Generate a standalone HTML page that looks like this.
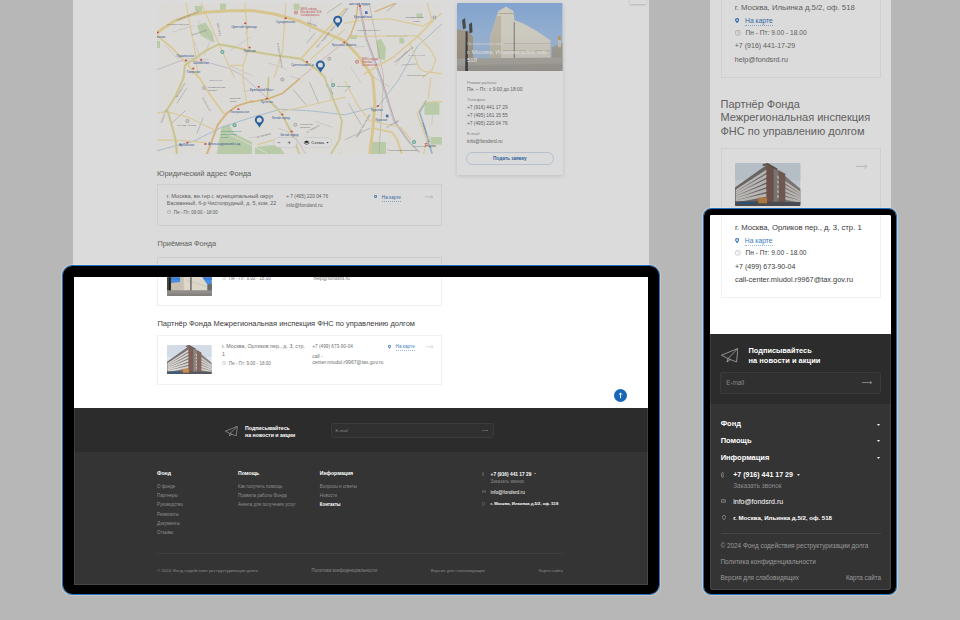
<!DOCTYPE html>
<html><head><meta charset="utf-8"><title>Contacts</title>
<style>
*{margin:0;padding:0;box-sizing:border-box}
html,body{width:960px;height:620px;overflow:hidden}
body{position:relative;background:#d6d6d6;font-family:"Liberation Sans",sans-serif}
.t{position:absolute;white-space:nowrap;line-height:1}
.r{position:absolute;display:block}
</style></head><body>
<div class="r" style="left:72.50px;top:0.00px;width:576.50px;height:588.00px;background:#fff"></div>
<div class="r" style="left:710.00px;top:0.00px;width:181.00px;height:588.00px;background:#fff"></div>
<div class="r" style="left:630.00px;top:-10.00px;width:16.00px;height:13.50px;background:#fff;box-shadow:0 1px 2px rgba(0,0,0,.18)"></div>
<svg class="r" style="left:157.00px;top:2.50px;" width="285.00" height="151.20" viewBox="0 0 285 151.2" preserveAspectRatio="none"><rect width="285" height="151.2" fill="#fffefa"/><path d="M40.0 22.5 L48.4 19.5 L54.5 28.5 L58.0 39.4 L53.2 38.2 L43.6 32.2Z" fill="#d8ecc4"/><path d="M174.6 76.3 L173.8 96.1" fill="none" stroke="#cfcfcb" stroke-width="0.45" stroke-linejoin="round" stroke-linecap="round"/><path d="M160.1 114.8 L145.1 119.0" fill="none" stroke="#ffffff" stroke-width="0.7" stroke-linejoin="round" stroke-linecap="round"/><path d="M70.8 41.8 L58.3 52.7" fill="none" stroke="#ffffff" stroke-width="0.7" stroke-linejoin="round" stroke-linecap="round"/><path d="M158.3 118.4 L174.9 124.2" fill="none" stroke="#cfcfcb" stroke-width="0.45" stroke-linejoin="round" stroke-linecap="round"/><path d="M206.7 84.0 L215.4 98.4" fill="none" stroke="#ffffff" stroke-width="0.7" stroke-linejoin="round" stroke-linecap="round"/><path d="M1.1 120.7 L14.9 128.9" fill="none" stroke="#ffffff" stroke-width="0.7" stroke-linejoin="round" stroke-linecap="round"/><path d="M149.2 2.8 L151.3 13.7" fill="none" stroke="#cfcfcb" stroke-width="0.45" stroke-linejoin="round" stroke-linecap="round"/><path d="M119.9 138.6 L119.8 155.6" fill="none" stroke="#ffffff" stroke-width="0.7" stroke-linejoin="round" stroke-linecap="round"/><path d="M100.8 69.2 L94.8 91.8" fill="none" stroke="#ffffff" stroke-width="0.7" stroke-linejoin="round" stroke-linecap="round"/><path d="M73.9 63.3 L95.4 72.7" fill="none" stroke="#cfcfcb" stroke-width="0.45" stroke-linejoin="round" stroke-linecap="round"/><path d="M71.8 44.2 L84.9 56.6" fill="none" stroke="#ffffff" stroke-width="0.7" stroke-linejoin="round" stroke-linecap="round"/><path d="M123.6 131.6 L113.7 137.7" fill="none" stroke="#ffffff" stroke-width="0.7" stroke-linejoin="round" stroke-linecap="round"/><path d="M276.7 98.1 L274.7 121.9" fill="none" stroke="#cfcfcb" stroke-width="0.45" stroke-linejoin="round" stroke-linecap="round"/><path d="M99.9 82.8 L107.4 86.1" fill="none" stroke="#ffffff" stroke-width="0.7" stroke-linejoin="round" stroke-linecap="round"/><path d="M41.7 124.8 L22.5 126.0" fill="none" stroke="#ffffff" stroke-width="0.7" stroke-linejoin="round" stroke-linecap="round"/><path d="M36.2 22.8 L15.5 29.2" fill="none" stroke="#cfcfcb" stroke-width="0.45" stroke-linejoin="round" stroke-linecap="round"/><path d="M114.4 143.0 L107.3 151.3" fill="none" stroke="#ffffff" stroke-width="0.7" stroke-linejoin="round" stroke-linecap="round"/><path d="M94.8 120.9 L80.1 122.2" fill="none" stroke="#ffffff" stroke-width="0.7" stroke-linejoin="round" stroke-linecap="round"/><path d="M213.8 72.2 L231.9 83.6" fill="none" stroke="#cfcfcb" stroke-width="0.45" stroke-linejoin="round" stroke-linecap="round"/><path d="M24.2 99.7 L3.7 105.7" fill="none" stroke="#ffffff" stroke-width="0.7" stroke-linejoin="round" stroke-linecap="round"/><path d="M239.5 72.4 L229.5 91.5" fill="none" stroke="#ffffff" stroke-width="0.7" stroke-linejoin="round" stroke-linecap="round"/><path d="M56.1 30.9 L47.2 52.4" fill="none" stroke="#cfcfcb" stroke-width="0.45" stroke-linejoin="round" stroke-linecap="round"/><path d="M272.2 55.1 L281.3 62.6" fill="none" stroke="#ffffff" stroke-width="0.7" stroke-linejoin="round" stroke-linecap="round"/><path d="M272.6 67.5 L248.3 72.4" fill="none" stroke="#ffffff" stroke-width="0.7" stroke-linejoin="round" stroke-linecap="round"/><path d="M8.0 42.2 L21.5 56.6" fill="none" stroke="#cfcfcb" stroke-width="0.45" stroke-linejoin="round" stroke-linecap="round"/><path d="M64.6 78.2 L68.3 85.8" fill="none" stroke="#ffffff" stroke-width="0.7" stroke-linejoin="round" stroke-linecap="round"/><path d="M243.0 121.7 L225.7 132.8" fill="none" stroke="#ffffff" stroke-width="0.7" stroke-linejoin="round" stroke-linecap="round"/><path d="M94.0 33.7 L73.4 47.5" fill="none" stroke="#cfcfcb" stroke-width="0.45" stroke-linejoin="round" stroke-linecap="round"/><path d="M47.6 116.6 L45.4 137.7" fill="none" stroke="#ffffff" stroke-width="0.7" stroke-linejoin="round" stroke-linecap="round"/><path d="M246.0 105.1 L255.8 115.5" fill="none" stroke="#ffffff" stroke-width="0.7" stroke-linejoin="round" stroke-linecap="round"/><path d="M154.8 4.1 L152.6 28.6" fill="none" stroke="#cfcfcb" stroke-width="0.45" stroke-linejoin="round" stroke-linecap="round"/><path d="M6.6 143.6 L5.7 154.0" fill="none" stroke="#ffffff" stroke-width="0.7" stroke-linejoin="round" stroke-linecap="round"/><path d="M97.7 40.0 L88.4 45.5" fill="none" stroke="#ffffff" stroke-width="0.7" stroke-linejoin="round" stroke-linecap="round"/><path d="M132.8 73.1 L142.2 75.7" fill="none" stroke="#cfcfcb" stroke-width="0.45" stroke-linejoin="round" stroke-linecap="round"/><path d="M103.8 18.5 L81.7 29.9" fill="none" stroke="#ffffff" stroke-width="0.7" stroke-linejoin="round" stroke-linecap="round"/><path d="M175.0 22.4 L184.8 32.3" fill="none" stroke="#ffffff" stroke-width="0.7" stroke-linejoin="round" stroke-linecap="round"/><path d="M28.9 54.9 L51.7 56.7" fill="none" stroke="#cfcfcb" stroke-width="0.45" stroke-linejoin="round" stroke-linecap="round"/><path d="M96.9 7.9 L107.5 7.9" fill="none" stroke="#ffffff" stroke-width="0.7" stroke-linejoin="round" stroke-linecap="round"/><path d="M17.7 10.2 L26.3 16.7" fill="none" stroke="#ffffff" stroke-width="0.7" stroke-linejoin="round" stroke-linecap="round"/><path d="M111.8 60.2 L129.6 66.2" fill="none" stroke="#cfcfcb" stroke-width="0.45" stroke-linejoin="round" stroke-linecap="round"/><path d="M256.4 117.8 L236.5 126.1" fill="none" stroke="#ffffff" stroke-width="0.7" stroke-linejoin="round" stroke-linecap="round"/><path d="M146.9 93.3 L142.2 100.8" fill="none" stroke="#ffffff" stroke-width="0.7" stroke-linejoin="round" stroke-linecap="round"/><path d="M105.2 85.5 L85.7 88.4" fill="none" stroke="#cfcfcb" stroke-width="0.45" stroke-linejoin="round" stroke-linecap="round"/><path d="M167.9 39.7 L183.0 39.9" fill="none" stroke="#ffffff" stroke-width="0.7" stroke-linejoin="round" stroke-linecap="round"/><path d="M50.2 35.0 L62.3 45.9" fill="none" stroke="#ffffff" stroke-width="0.7" stroke-linejoin="round" stroke-linecap="round"/><path d="M102.2 133.5 L91.8 134.9" fill="none" stroke="#cfcfcb" stroke-width="0.45" stroke-linejoin="round" stroke-linecap="round"/><path d="M233.5 130.5 L243.2 142.0" fill="none" stroke="#ffffff" stroke-width="0.7" stroke-linejoin="round" stroke-linecap="round"/><path d="M23.0 67.8 L19.4 90.6" fill="none" stroke="#ffffff" stroke-width="0.7" stroke-linejoin="round" stroke-linecap="round"/><path d="M36.9 37.4 L44.5 58.9" fill="none" stroke="#cfcfcb" stroke-width="0.45" stroke-linejoin="round" stroke-linecap="round"/><path d="M47.9 17.7 L68.6 21.6" fill="none" stroke="#ffffff" stroke-width="0.7" stroke-linejoin="round" stroke-linecap="round"/><path d="M110.0 101.0 L125.8 102.1" fill="none" stroke="#ffffff" stroke-width="0.7" stroke-linejoin="round" stroke-linecap="round"/><path d="M184.4 150.0 L173.6 156.8" fill="none" stroke="#cfcfcb" stroke-width="0.45" stroke-linejoin="round" stroke-linecap="round"/><path d="M135.1 100.3 L154.7 104.1" fill="none" stroke="#ffffff" stroke-width="0.7" stroke-linejoin="round" stroke-linecap="round"/><path d="M165.3 68.9 L144.2 80.5" fill="none" stroke="#ffffff" stroke-width="0.7" stroke-linejoin="round" stroke-linecap="round"/><path d="M249.5 47.4 L239.1 62.2" fill="none" stroke="#cfcfcb" stroke-width="0.45" stroke-linejoin="round" stroke-linecap="round"/><path d="M11.2 100.9 L-1.9 112.9" fill="none" stroke="#ffffff" stroke-width="0.7" stroke-linejoin="round" stroke-linecap="round"/><path d="M119.2 114.3 L133.7 121.8" fill="none" stroke="#ffffff" stroke-width="0.7" stroke-linejoin="round" stroke-linecap="round"/><path d="M207.9 43.5 L197.9 44.1" fill="none" stroke="#cfcfcb" stroke-width="0.45" stroke-linejoin="round" stroke-linecap="round"/><path d="M69.6 86.7 L67.8 109.5" fill="none" stroke="#ffffff" stroke-width="0.7" stroke-linejoin="round" stroke-linecap="round"/><path d="M129.2 45.3 L113.3 57.2" fill="none" stroke="#ffffff" stroke-width="0.7" stroke-linejoin="round" stroke-linecap="round"/><path d="M193.9 64.6 L203.8 79.5" fill="none" stroke="#cfcfcb" stroke-width="0.45" stroke-linejoin="round" stroke-linecap="round"/><path d="M156.1 9.5 L167.4 11.6" fill="none" stroke="#ffffff" stroke-width="0.7" stroke-linejoin="round" stroke-linecap="round"/><path d="M51.5 87.8 L45.4 100.8" fill="none" stroke="#ffffff" stroke-width="0.7" stroke-linejoin="round" stroke-linecap="round"/><path d="M41.1 17.8 L53.5 35.8" fill="none" stroke="#cfcfcb" stroke-width="0.45" stroke-linejoin="round" stroke-linecap="round"/><path d="M278.2 7.0 L266.6 12.6" fill="none" stroke="#ffffff" stroke-width="0.7" stroke-linejoin="round" stroke-linecap="round"/><path d="M178.8 143.1 L175.3 157.4" fill="none" stroke="#ffffff" stroke-width="0.7" stroke-linejoin="round" stroke-linecap="round"/><path d="M121.0 124.9 L131.9 129.3" fill="none" stroke="#cfcfcb" stroke-width="0.45" stroke-linejoin="round" stroke-linecap="round"/><path d="M10.7 65.5 L20.0 67.6" fill="none" stroke="#ffffff" stroke-width="0.7" stroke-linejoin="round" stroke-linecap="round"/><path d="M152.7 55.2 L169.1 58.2" fill="none" stroke="#ffffff" stroke-width="0.7" stroke-linejoin="round" stroke-linecap="round"/><path d="M92.3 22.8 L88.1 31.0" fill="none" stroke="#cfcfcb" stroke-width="0.45" stroke-linejoin="round" stroke-linecap="round"/><path d="M38.0 3.0 L45.0 3.0 L45.0 8.6 L38.0 8.6Z" fill="#d8ecc4"/><path d="M63.0 0.7 L69.0 0.7 L69.0 6.8 L63.0 6.8Z" fill="#d8ecc4"/><path d="M136.6 0.7 L142.6 0.7 L142.6 6.8 L136.6 6.8Z" fill="#d8ecc4"/><path d="M219.4 38.0 L224.0 35.8 L229.1 45.0 L228.0 57.6 L221.0 55.0Z" fill="#d8ecc4"/><path d="M242.4 34.6 L247.3 34.6 L247.3 40.6 L242.4 40.6Z" fill="#d8ecc4"/><path d="M259.4 10.4 L265.4 10.4 L265.4 15.2 L259.4 15.2Z" fill="#d8ecc4"/><path d="M192.8 32.0 L200.0 32.0 L200.0 36.0 L192.8 36.0Z" fill="#d8ecc4"/><path d="M59.6 151.5 L64.6 124.2 L72.0 121.7 L77.0 130.4 L95.0 139.1 L95.0 151.5Z" fill="#d8ecc4"/><path d="M98.0 144.0 L121.6 141.6 L127.8 151.5 L98.0 151.5Z" fill="#d8ecc4"/><path d="M267.5 99.3 L282.4 99.3 L282.4 111.8 L267.5 111.8Z" fill="#d8ecc4"/><path d="M273.7 134.0 L284.9 134.0 L284.9 141.6 L273.7 141.6Z" fill="#d8ecc4"/><path d="M212.8 139.0 L229.0 139.0 L229.0 151.5 L212.8 151.5Z" fill="#d8ecc4"/><path d="M0.0 38.0 L3.0 38.0 L3.0 45.0 L0.0 45.0Z" fill="#d8ecc4"/><path d="M0.0 15.0 L20.0 28.0 L40.0 45.0 L60.0 60.0" fill="none" stroke="#ffffff" stroke-width="0.9" stroke-linejoin="round" stroke-linecap="round"/><path d="M10.0 0.0 L18.0 12.0" fill="none" stroke="#ffffff" stroke-width="0.9" stroke-linejoin="round" stroke-linecap="round"/><path d="M55.0 5.0 L80.0 22.0 L90.0 35.0" fill="none" stroke="#ffffff" stroke-width="0.9" stroke-linejoin="round" stroke-linecap="round"/><path d="M100.0 10.0 L110.0 40.0 L105.0 70.0" fill="none" stroke="#ffffff" stroke-width="0.9" stroke-linejoin="round" stroke-linecap="round"/><path d="M60.0 15.0 L100.0 20.0 L140.0 25.0" fill="none" stroke="#ffffff" stroke-width="0.9" stroke-linejoin="round" stroke-linecap="round"/><path d="M0.0 55.0 L20.0 70.0 L30.0 90.0" fill="none" stroke="#ffffff" stroke-width="0.9" stroke-linejoin="round" stroke-linecap="round"/><path d="M140.0 30.0 L170.0 45.0 L200.0 50.0" fill="none" stroke="#ffffff" stroke-width="0.9" stroke-linejoin="round" stroke-linecap="round"/><path d="M150.0 80.0 L180.0 90.0 L210.0 85.0" fill="none" stroke="#ffffff" stroke-width="0.9" stroke-linejoin="round" stroke-linecap="round"/><path d="M230.0 80.0 L260.0 85.0 L285.0 80.0" fill="none" stroke="#ffffff" stroke-width="0.9" stroke-linejoin="round" stroke-linecap="round"/><path d="M0.0 90.0 L25.0 100.0 L50.0 105.0" fill="none" stroke="#ffffff" stroke-width="0.9" stroke-linejoin="round" stroke-linecap="round"/><path d="M70.0 130.0 L90.0 140.0 L110.0 150.0" fill="none" stroke="#ffffff" stroke-width="0.9" stroke-linejoin="round" stroke-linecap="round"/><path d="M170.0 110.0 L200.0 130.0 L210.0 150.0" fill="none" stroke="#ffffff" stroke-width="0.9" stroke-linejoin="round" stroke-linecap="round"/><path d="M235.0 20.0 L250.0 40.0 L255.0 60.0" fill="none" stroke="#ffffff" stroke-width="0.9" stroke-linejoin="round" stroke-linecap="round"/><path d="M120.0 20.0 L140.0 60.0 L160.0 70.0" fill="none" stroke="#ffffff" stroke-width="0.9" stroke-linejoin="round" stroke-linecap="round"/><path d="M30.0 80.0 L40.0 100.0 L45.0 130.0" fill="none" stroke="#ffffff" stroke-width="0.9" stroke-linejoin="round" stroke-linecap="round"/><path d="M250.0 90.0 L240.0 110.0 L250.0 130.0" fill="none" stroke="#ffffff" stroke-width="0.9" stroke-linejoin="round" stroke-linecap="round"/><path d="M136.5 86.9 L149.0 101.8" fill="none" stroke="#b8b8b5" stroke-width="0.6" stroke-linejoin="round" stroke-linecap="round"/><path d="M152.6 79.5 L161.3 99.3" fill="none" stroke="#b8b8b5" stroke-width="0.6" stroke-linejoin="round" stroke-linecap="round"/><path d="M188.0 88.2 L193.0 84.4" fill="none" stroke="#b8b8b5" stroke-width="0.6" stroke-linejoin="round" stroke-linecap="round"/><path d="M191.7 100.6 L204.1 121.7" fill="none" stroke="#b8b8b5" stroke-width="0.6" stroke-linejoin="round" stroke-linecap="round"/><path d="M188.0 136.6 L212.8 125.4" fill="none" stroke="#b8b8b5" stroke-width="0.6" stroke-linejoin="round" stroke-linecap="round"/><path d="M170.0 10.0 L185.0 0.0" fill="none" stroke="#b8b8b5" stroke-width="0.6" stroke-linejoin="round" stroke-linecap="round"/><path d="M230.0 8.0 L240.0 0.0" fill="none" stroke="#b8b8b5" stroke-width="0.6" stroke-linejoin="round" stroke-linecap="round"/><path d="M230.0 33.0 L250.0 33.0" fill="none" stroke="#b8b8b5" stroke-width="0.6" stroke-linejoin="round" stroke-linecap="round"/><path d="M245.0 62.0 L260.0 61.0" fill="none" stroke="#b8b8b5" stroke-width="0.6" stroke-linejoin="round" stroke-linecap="round"/><path d="M20.0 100.0 L30.0 85.0" fill="none" stroke="#b8b8b5" stroke-width="0.6" stroke-linejoin="round" stroke-linecap="round"/><path d="M15.0 120.0 L28.0 108.0" fill="none" stroke="#b8b8b5" stroke-width="0.6" stroke-linejoin="round" stroke-linecap="round"/><path d="M40.0 130.0 L46.0 115.0" fill="none" stroke="#b8b8b5" stroke-width="0.6" stroke-linejoin="round" stroke-linecap="round"/><path d="M150.0 40.0 L158.0 30.0" fill="none" stroke="#b8b8b5" stroke-width="0.6" stroke-linejoin="round" stroke-linecap="round"/><path d="M0.0 66.7 L24.2 57.6 L48.4 58.8 L72.6 65.5 L84.7 72.1 L93.0 79.5 L120.3 104.3 L148.9 151.5" fill="none" stroke="#c8b3d8" stroke-width="0.5" stroke-linejoin="round" stroke-linecap="round"/><path d="M0.0 147.8 L37.3 137.9 L64.6 124.2 L95.0 114.3 L124.0 106.2 L155.0 108.0 L188.0 111.8 L221.5 103.1 L241.4 77.0 L260.6 43.0 L286.0 20.1" fill="none" stroke="#9cc3e6" stroke-width="0.6" stroke-linejoin="round" stroke-linecap="round"/><path d="M143.8 74.5 L188.0 38.2" fill="none" stroke="#eaa3a3" stroke-width="0.5" stroke-linejoin="round" stroke-linecap="round"/><path d="M202.5 0.0 L209.8 35.8 L224.3 74.5 L237.7 118.0 L252.6 139.1 L262.5 149.0" fill="none" stroke="#eab3cf" stroke-width="1.0" stroke-linejoin="round" stroke-linecap="round"/><path d="M201.3 0.0 L208.6 35.8 L223.1 74.5 L236.5 118.0 L251.4 139.1 L261.3 149.0" fill="none" stroke="#9fd3c8" stroke-width="0.6" stroke-linejoin="round" stroke-linecap="round"/><path d="M212.2 0.0 L226.7 74.5 L222.0 150.0" fill="none" stroke="#b9a796" stroke-width="0.4" stroke-linejoin="round" stroke-linecap="round"/><path d="M268.7 98.1 L262.5 109.3 L267.5 124.2 L271.2 139.1 L275.0 150.0" fill="none" stroke="#aacde8" stroke-width="1.6" stroke-linejoin="round" stroke-linecap="round"/><path d="M170.0 82.0 L175.0 90.6" fill="none" stroke="#aacde8" stroke-width="2.2" stroke-linejoin="round" stroke-linecap="round"/><path d="M29.0 0.0 L33.3 23.7 L38.7 52.8 L41.0 74.5" fill="none" stroke="#fdeab0" stroke-width="1.15" stroke-linejoin="round" stroke-linecap="round"/><path d="M44.2 0.0 L61.7 40.6 L73.8 67.3 L77.5 74.5" fill="none" stroke="#fdeab0" stroke-width="1.15" stroke-linejoin="round" stroke-linecap="round"/><path d="M73.8 62.4 L86.0 62.4 L90.0 50.3" fill="none" stroke="#fdeab0" stroke-width="1.15" stroke-linejoin="round" stroke-linecap="round"/><path d="M86.0 62.4 L86.0 75.0" fill="none" stroke="#fdeab0" stroke-width="1.15" stroke-linejoin="round" stroke-linecap="round"/><path d="M88.0 0.0 L91.0 45.0" fill="none" stroke="#fdeab0" stroke-width="1.15" stroke-linejoin="round" stroke-linecap="round"/><path d="M129.0 0.0 L128.0 13.0 L125.7 48.0 L117.2 74.5" fill="none" stroke="#fdeab0" stroke-width="1.15" stroke-linejoin="round" stroke-linecap="round"/><path d="M153.5 56.4 L188.0 26.1" fill="none" stroke="#fdeab0" stroke-width="1.15" stroke-linejoin="round" stroke-linecap="round"/><path d="M85.7 74.5 L89.4 98.1" fill="none" stroke="#fdeab0" stroke-width="1.15" stroke-linejoin="round" stroke-linecap="round"/><path d="M188.0 20.1 L206.0 17.0 L232.8 15.8 L246.0 18.9 L266.6 23.1 L275.0 17.6 L286.0 9.2" fill="none" stroke="#fdeab0" stroke-width="1.15" stroke-linejoin="round" stroke-linecap="round"/><path d="M275.0 17.6 L270.3 0.0" fill="none" stroke="#fdeab0" stroke-width="1.15" stroke-linejoin="round" stroke-linecap="round"/><path d="M192.8 33.4 L259.4 32.8" fill="none" stroke="#fdeab0" stroke-width="1.15" stroke-linejoin="round" stroke-linecap="round"/><path d="M260.6 33.4 L272.7 45.5 L278.7 56.3 L275.0 67.2 L265.4 74.5" fill="none" stroke="#fdeab0" stroke-width="1.15" stroke-linejoin="round" stroke-linecap="round"/><path d="M253.3 40.6 L261.8 64.8 L266.6 68.4 L286.0 70.8" fill="none" stroke="#fdeab0" stroke-width="1.15" stroke-linejoin="round" stroke-linecap="round"/><path d="M273.7 74.5 L271.2 95.6" fill="none" stroke="#fdeab0" stroke-width="1.15" stroke-linejoin="round" stroke-linecap="round"/><path d="M284.9 98.7 L267.5 99.3 L260.0 110.5 L265.0 124.2 L270.0 136.6 L266.3 151.5" fill="none" stroke="#fdeab0" stroke-width="1.15" stroke-linejoin="round" stroke-linecap="round"/><path d="M0.0 109.9 L10.0 108.7 L31.0 114.3 L57.1 126.7" fill="none" stroke="#fdeab0" stroke-width="1.15" stroke-linejoin="round" stroke-linecap="round"/><path d="M0.0 137.2 L19.9 137.2 L48.4 139.7" fill="none" stroke="#fdeab0" stroke-width="1.15" stroke-linejoin="round" stroke-linecap="round"/><path d="M100.5 141.6 L117.8 136.6" fill="none" stroke="#fdeab0" stroke-width="1.15" stroke-linejoin="round" stroke-linecap="round"/><path d="M125.3 108.0 L145.2 104.3 L172.5 97.5 L188.0 94.4" fill="none" stroke="#fdeab0" stroke-width="1.15" stroke-linejoin="round" stroke-linecap="round"/><path d="M188.0 78.2 L200.4 101.8 L212.8 118.0 L243.9 124.2 L253.8 136.6" fill="none" stroke="#fdeab0" stroke-width="1.15" stroke-linejoin="round" stroke-linecap="round"/><path d="M0.0 32.2 L15.7 45.5 L30.3 61.2 L41.1 74.5 L42.2 74.5 L52.2 90.6 L58.4 99.3 L67.0 110.5" fill="none" stroke="#fdeab0" stroke-width="1.8" stroke-linejoin="round" stroke-linecap="round"/><path d="M145.0 54.6 L175.3 20.7 L188.0 5.6" fill="none" stroke="#fdeab0" stroke-width="1.7" stroke-linejoin="round" stroke-linecap="round"/><path d="M207.4 70.9 L236.4 54.0 L260.6 33.4 L276.3 17.6" fill="none" stroke="#fdeab0" stroke-width="1.6" stroke-linejoin="round" stroke-linecap="round"/><path d="M216.0 125.4 L235.2 129.2 L240.2 136.6 L245.1 151.5" fill="none" stroke="#fdeab0" stroke-width="2.0" stroke-linejoin="round" stroke-linecap="round"/><path d="M19.9 151.5 L18.6 136.6 L13.7 118.0 L10.0 106.8 L18.6 93.1 L26.7 74.5 L27.8 62.4 L48.4 47.9 L61.7 41.3 L78.7 44.3 L95.0 48.5 L117.0 52.1 L143.8 55.8 L160.8 67.3 L168.0 74.5" fill="none" stroke="#fdeab0" stroke-width="2.4" stroke-linejoin="round" stroke-linecap="round"/><path d="M19.9 151.5 L18.6 136.6 L13.7 118.0 L10.0 106.8 L18.6 93.1 L26.7 74.5 L27.8 62.4 L48.4 47.9 L61.7 41.3 L78.7 44.3 L95.0 48.5 L117.0 52.1 L143.8 55.8 L160.8 67.3 L168.0 74.5" fill="none" stroke="#c9e3b5" stroke-width="0.7" stroke-linejoin="round" stroke-linecap="round"/><path d="M111.6 74.5 L110.4 95.6 L125.3 111.8 L134.0 129.2 L142.7 151.5" fill="none" stroke="#fdeab0" stroke-width="2.0" stroke-linejoin="round" stroke-linecap="round"/><path d="M111.6 74.5 L110.4 95.6 L125.3 111.8 L134.0 129.2 L142.7 151.5" fill="none" stroke="#c9e3b5" stroke-width="0.6" stroke-linejoin="round" stroke-linecap="round"/><path d="M167.5 74.5 L175.0 93.1 L185.0 118.0 L182.4 136.6 L173.7 151.5" fill="none" stroke="#fdeab0" stroke-width="2.0" stroke-linejoin="round" stroke-linecap="round"/><path d="M167.5 74.5 L175.0 93.1 L185.0 118.0 L182.4 136.6 L173.7 151.5" fill="none" stroke="#c9e3b5" stroke-width="0.6" stroke-linejoin="round" stroke-linecap="round"/><path d="M95.0 98.1 L79.5 103.1 L69.6 110.5 L60.9 121.7 L49.7 151.5" fill="none" stroke="#f7d096" stroke-width="2.0" stroke-linejoin="round" stroke-linecap="round"/><path d="M93.0 99.3 L111.6 95.6 L125.3 90.6 L142.7 75.7" fill="none" stroke="#f2cf8e" stroke-width="1.6" stroke-linejoin="round" stroke-linecap="round"/><path d="M200.7 1.9 L198.9 17.6 L194.0 31.0 L188.0 40.6" fill="none" stroke="#f7d096" stroke-width="1.4" stroke-linejoin="round" stroke-linecap="round"/><path d="M218.2 8.6 L237.6 0.7" fill="none" stroke="#f7d096" stroke-width="1.4" stroke-linejoin="round" stroke-linecap="round"/><path d="M0.0 29.8 L6.0 25.5 L18.2 17.7 L35.0 11.6 L48.4 9.2 L72.6 7.7 L95.0 7.4 L117.2 11.0 L141.4 17.7 L165.6 28.5 L188.0 38.2 L200.0 51.5 L212.2 68.5 L215.8 74.5 L217.8 99.3 L216.0 124.2 L212.8 151.5" fill="none" stroke="#fbe6a8" stroke-width="3.0" stroke-linejoin="round" stroke-linecap="round"/><text x="20" y="18" font-family="Liberation Sans" font-size="2.4" fill="#8a8a88" transform="rotate(-22 20 18)">Садовая-Каретная ул.</text><text x="35" y="33" font-family="Liberation Sans" font-size="2.4" fill="#8a8a88" transform="rotate(-20 35 33)">Успенский пер.</text><text x="150" y="20" font-family="Liberation Sans" font-size="2.4" fill="#8a8a88" transform="rotate(20 150 20)">Даев пер.</text><text x="160" y="45" font-family="Liberation Sans" font-size="2.4" fill="#8a8a88" transform="rotate(-50 160 45)">просп. Академика Сахарова</text><text x="183" y="17" font-family="Liberation Sans" font-size="2.4" fill="#8a8a88" transform="rotate(-55 183 17)">Орликов пер.</text><text x="200" y="28" font-family="Liberation Sans" font-size="2.4" fill="#8a8a88" transform="rotate(0 200 28)">Новая Басманная ул.</text><text x="238" y="60" font-family="Liberation Sans" font-size="2.4" fill="#8a8a88" transform="rotate(-40 238 60)">Старая Басманная ул.</text><text x="250" y="73" font-family="Liberation Sans" font-size="2.4" fill="#8a8a88" transform="rotate(0 250 73)">Гороховский пер.</text><text x="20" y="95" font-family="Liberation Sans" font-size="2.4" fill="#8a8a88" transform="rotate(-60 20 95)">Петровский б-р</text><text x="45" y="95" font-family="Liberation Sans" font-size="2.4" fill="#8a8a88" transform="rotate(60 45 95)">Неглинная ул.</text><text x="100" y="135" font-family="Liberation Sans" font-size="2.4" fill="#8a8a88" transform="rotate(-15 100 135)">ул. Варварка</text><text x="150" y="130" font-family="Liberation Sans" font-size="2.4" fill="#8a8a88" transform="rotate(-30 150 130)">ул. Забелина</text><text x="200" y="135" font-family="Liberation Sans" font-size="2.4" fill="#8a8a88" transform="rotate(-60 200 135)">Садовая-Черногрязская</text><text x="230" y="125" font-family="Liberation Sans" font-size="2.4" fill="#8a8a88" transform="rotate(-30 230 125)">ул. Казакова</text><text x="265" y="120" font-family="Liberation Sans" font-size="2.4" fill="#8a8a88" transform="rotate(70 265 120)">Лефортовский пер.</text><text x="60" y="20" font-family="Liberation Sans" font-size="2.4" fill="#8a8a88" transform="rotate(80 60 20)">Цветной б-р</text><text x="5" y="120" font-family="Liberation Sans" font-size="2.4" fill="#8a8a88" transform="rotate(-70 5 120)">Тверской б-р</text><text x="120" y="40" font-family="Liberation Sans" font-size="2.4" fill="#8a8a88" transform="rotate(80 120 40)">Большая Сухаревская</text><path d="M176.2 17.3A4.5 4.5 0 1 1 185.2 17.3C185.2 19.900000000000002 182.29999999999998 21.5 180.89999999999998 25.1C179.5 21.5 176.2 19.900000000000002 176.2 17.3Z" fill="#2f72b6"/><circle cx="180.7" cy="17.3" r="2.5" fill="#fff"/><path d="M158.9 62A4.5 4.5 0 1 1 167.9 62C167.9 64.6 165.0 66.2 163.6 69.8C162.20000000000002 66.2 158.9 64.6 158.9 62Z" fill="#2f72b6"/><circle cx="163.4" cy="62" r="2.5" fill="#fff"/><path d="M97.8 116.9A4.5 4.5 0 1 1 106.8 116.9C106.8 119.5 103.89999999999999 121.10000000000001 102.5 124.7C101.1 121.10000000000001 97.8 119.5 97.8 116.9Z" fill="#2f72b6"/><circle cx="102.3" cy="116.9" r="2.5" fill="#fff"/><rect x="28" y="56.6" width="2" height="1.6" fill="#e05555"/><rect x="43.2" y="56.2" width="2" height="1.6" fill="#e05555"/><rect x="35.3" y="64.7" width="2" height="1.6" fill="#e05555"/><rect x="87.3" y="19.5" width="2" height="1.6" fill="#e05555"/><rect x="91.6" y="43.7" width="2" height="1.6" fill="#e05555"/><rect x="-0.4" y="28.7" width="2" height="1.6" fill="#e05555"/><rect x="127.69999999999999" y="14.399999999999999" width="2" height="1.6" fill="#e05555"/><rect x="149" y="58.0" width="2" height="1.6" fill="#e05555"/><rect x="186.4" y="38.6" width="2" height="1.6" fill="#e05555"/><rect x="80.4" y="105.4" width="2" height="1.6" fill="#e05555"/><rect x="29.4" y="138.89999999999998" width="2" height="1.6" fill="#e05555"/><rect x="47.4" y="140.2" width="2" height="1.6" fill="#e05555"/><rect x="100.7" y="83.0" width="2" height="1.6" fill="#e05555"/><rect x="108.8" y="94.8" width="2" height="1.6" fill="#e05555"/><rect x="124.3" y="110.7" width="2" height="1.6" fill="#e05555"/><rect x="133.6" y="127.7" width="2" height="1.6" fill="#e05555"/><rect x="219.9" y="102.3" width="2" height="1.6" fill="#e05555"/><rect x="202" y="2.2" width="2" height="1.6" fill="#e05555"/><text x="19.4" y="54.5" font-family="Liberation Sans" font-size="3.2" fill="#3f66ad">Пушкинская</text><text x="36.3" y="61.2" font-family="Liberation Sans" font-size="3.2" fill="#3f66ad">Чеховская</text><text x="29.6" y="69.6" font-family="Liberation Sans" font-size="3.2" fill="#3f66ad">Тверская</text><text x="74.4" y="24.6" font-family="Liberation Sans" font-size="3.2" fill="#3f66ad">Цветной бульвар</text><text x="86.5" y="48.9" font-family="Liberation Sans" font-size="3.2" fill="#3f66ad">Трубная</text><text x="0" y="34.7" font-family="Liberation Sans" font-size="3.2" fill="#3f66ad">вская</text><text x="119" y="19.9" font-family="Liberation Sans" font-size="3.2" fill="#3f66ad">Сухаревская</text><text x="134" y="62.9" font-family="Liberation Sans" font-size="3.2" fill="#3f66ad">Сретенский б-р</text><text x="175" y="43.4" font-family="Liberation Sans" font-size="3.2" fill="#3f66ad">Красные Ворота</text><text x="197" y="14.9" font-family="Liberation Sans" font-size="3.2" fill="#3f66ad">Курский вкз.</text><text x="73" y="110" font-family="Liberation Sans" font-size="3.2" fill="#3f66ad">Театральная</text><text x="22" y="143.4" font-family="Liberation Sans" font-size="3.2" fill="#3f66ad">Арбатская</text><text x="51" y="142" font-family="Liberation Sans" font-size="3.2" fill="#3f66ad">Александровский сад</text><text x="93" y="88.1" font-family="Liberation Sans" font-size="3.2" fill="#3f66ad">Кузнецкий Мост</text><text x="103.5" y="99.9" font-family="Liberation Sans" font-size="3.2" fill="#3f66ad">Лубянка</text><text x="115" y="115.9" font-family="Liberation Sans" font-size="3.2" fill="#3f66ad">Китай-город</text><text x="123.5" y="132.9" font-family="Liberation Sans" font-size="3.2" fill="#3f66ad">Китай-город</text><text x="214" y="107.7" font-family="Liberation Sans" font-size="3.2" fill="#3f66ad">Курская</text><text x="218.5" y="117.9" font-family="Liberation Sans" font-size="3.2" fill="#3f66ad">Курская</text><text x="192" y="1.6" font-family="Liberation Sans" font-size="3.2" fill="#3f66ad">Чистые пруды</text><text x="143.5" y="7.2" font-family="Liberation Sans" font-size="2.9" fill="#e06a6a">МФЦ города</text><text x="143.5" y="10.3" font-family="Liberation Sans" font-size="2.9" fill="#e06a6a">Москвы им. В.В.</text><text x="143.5" y="13.4" font-family="Liberation Sans" font-size="2.9" fill="#e06a6a">Солженицына</text><text x="205" y="56.8" font-family="Liberation Sans" font-size="2.9" fill="#e06a6a">МФЦ города</text><text x="205" y="59.9" font-family="Liberation Sans" font-size="2.9" fill="#e06a6a">Москвы</text><text x="205" y="63" font-family="Liberation Sans" font-size="2.9" fill="#e06a6a">Басманный</text><text x="52" y="78.5" font-family="Liberation Sans" font-size="2.5" fill="#a9a3c0">ТВЕРСКОЙ</text><text x="51" y="85.5" font-family="Liberation Sans" font-size="2.5" fill="#777">Правительство</text><text x="51" y="88.5" font-family="Liberation Sans" font-size="2.5" fill="#777">Москвы</text><text x="73" y="96" font-family="Liberation Sans" font-size="2.5" fill="#777">Большой</text><text x="73" y="99" font-family="Liberation Sans" font-size="2.5" fill="#777">театр</text><text x="20" y="123.5" font-family="Liberation Sans" font-size="2.5" fill="#777">МХТ им. Чехова</text><text x="64" y="129.5" font-family="Liberation Sans" font-size="2.5" fill="#4aa592">Государственный</text><text x="64" y="132.5" font-family="Liberation Sans" font-size="2.5" fill="#4aa592">исторический</text><text x="64" y="135.5" font-family="Liberation Sans" font-size="2.5" fill="#4aa592">музей</text><text x="143" y="122.5" font-family="Liberation Sans" font-size="2.5" fill="#777">Хоральная</text><text x="143" y="125.5" font-family="Liberation Sans" font-size="2.5" fill="#777">синагога</text><text x="249" y="15.5" font-family="Liberation Sans" font-size="2.5" fill="#777">Богоявленский</text><text x="256" y="18.7" font-family="Liberation Sans" font-size="2.5" fill="#777">собор</text><text x="251.6" y="53.5" font-family="Liberation Sans" font-size="2.5" fill="#a9a3c0">БАСМАННЫЙ</text><text x="180" y="84" font-family="Liberation Sans" font-size="2.5" fill="#4aa592">Сретенский</text><text x="255" y="143.8" font-family="Liberation Sans" font-size="2.5" fill="#4aa592">Чкаловская</text><text x="10" y="22" font-family="Liberation Sans" font-size="2.5" fill="#888">Садовая-Каретная</text><circle cx="65.4" cy="49.1" r="2" fill="#6cc3ad"/><circle cx="65.4" cy="49.1" r="1" fill="#fff" opacity="0.7"/><circle cx="77.6" cy="122.3" r="2" fill="#6cc3ad"/><circle cx="77.6" cy="122.3" r="1" fill="#fff" opacity="0.7"/><circle cx="176.2" cy="82" r="2" fill="#6cc3ad"/><circle cx="176.2" cy="82" r="1" fill="#fff" opacity="0.7"/><circle cx="257" cy="139.1" r="2" fill="#6cc3ad"/><circle cx="257" cy="139.1" r="1" fill="#fff" opacity="0.7"/><circle cx="172.3" cy="55.8" r="2" fill="#c8c8c8"/><circle cx="172.3" cy="55.8" r="1" fill="#fff" opacity="0.7"/><circle cx="47.2" cy="85" r="2" fill="#c8c8c8"/><circle cx="47.2" cy="85" r="1" fill="#fff" opacity="0.7"/><circle cx="30.4" cy="118" r="2" fill="#c8c8c8"/><circle cx="30.4" cy="118" r="1" fill="#fff" opacity="0.7"/><circle cx="138.3" cy="121.7" r="2" fill="#c8c8c8"/><circle cx="138.3" cy="121.7" r="1" fill="#fff" opacity="0.7"/><circle cx="277.5" cy="14.6" r="2" fill="#c0c0c0"/><circle cx="277.5" cy="14.6" r="1" fill="#fff" opacity="0.7"/><circle cx="139" cy="9.4" r="2" fill="#ee9a9a"/><circle cx="139" cy="9.4" r="1" fill="#fff" opacity="0.7"/><circle cx="200" cy="58.8" r="2" fill="#ee9a9a"/><circle cx="200" cy="58.8" r="1" fill="#fff" opacity="0.7"/><circle cx="125.3" cy="76.4" r="2" fill="#c8c8c8"/><circle cx="125.3" cy="76.4" r="1" fill="#fff" opacity="0.7"/><rect x="208" y="8.3" width="2.6" height="2.6" fill="#5577cc"/><rect x="228.9" y="111.7" width="2.6" height="2.6" fill="#5577cc"/><rect x="116.7" y="134.4" width="23" height="10.3" rx="5.1" fill="#fff" style="filter:drop-shadow(0 0.3px 0.6px rgba(0,0,0,.25))"/><path d="M120.6 139.6H123.4M130.8 139.6H133.8M132.3 138.1V141.1" stroke="#444" stroke-width="0.45"/><rect x="143.9" y="134.4" width="31" height="10.3" rx="5.1" fill="#fff" style="filter:drop-shadow(0 0.3px 0.6px rgba(0,0,0,.25))"/><path d="M146.8 138.9L149.6 137.5L152.4 138.9L149.6 140.3Z" fill="#333"/><path d="M146.8 140.1L149.6 141.5L152.4 140.1" fill="none" stroke="#333" stroke-width="0.6"/><text x="154.2" y="141.2" font-family="Liberation Sans" font-size="4.3" fill="#444">Схема</text><path d="M169.6 139H171.6L170.6 140.4Z" fill="#444"/><text x="267.5" y="144" font-family="Liberation Sans" font-size="4.5" fill="#e33">Я</text><text x="270.8" y="143.6" font-family="Liberation Sans" font-size="3.2" fill="#555">ндекс</text><text x="230.2" y="148" font-family="Liberation Sans" font-size="1.9" fill="#666">© Яндекс Условия использования</text></svg>
<div class="r" style="left:457.00px;top:3.00px;width:106.00px;height:171.60px;background:#fff;box-shadow:0 1px 4px rgba(0,0,0,.13);border-radius:1px"></div>
<svg class="r" style="left:457.20px;top:3.00px;border-radius:1px 1px 0 0" width="105.50" height="68.30" viewBox="0 0 105.5 68.3" preserveAspectRatio="none"><defs><linearGradient id="skyA" x1="0" y1="0" x2="0" y2="1"><stop offset="0" stop-color="#98bff0"/><stop offset="1" stop-color="#c2d9f2"/></linearGradient><linearGradient id="shA" x1="0" y1="0" x2="0" y2="1"><stop offset="0.45" stop-color="#000" stop-opacity="0"/><stop offset="1" stop-color="#000" stop-opacity="0.08"/></linearGradient></defs><rect width="105.5" height="68.3" fill="url(#skyA)"/><path d="M33.50 33.24 L39.60 13.10 L41.50 8.06 L49.00 3.53 L56.50 8.06 L57.50 17.13 L66.00 20.15 L80.00 28.21 L93.50 37.27 L93.50 56.41 L33.50 56.41Z" fill="#eeeadf"/><path d="M33.50 33.24 L39.60 13.10 L44.00 13.10 L44.00 56.41 L33.50 56.41Z" fill="#d9d2c0"/><path d="M46.00 40.29 L93.00 40.29 L93.00 41.10 L46.00 41.10Z" fill="#d6cfbd"/><path d="M46.00 47.35 L93.00 47.35 L93.00 48.15 L46.00 48.15Z" fill="#d6cfbd"/><path d="M41.50 10.07 L56.50 10.07 L56.50 11.08 L41.50 11.08Z" fill="#cbc3b0"/><path d="M56.80 19.14 L57.60 19.14 L57.60 56.41 L56.80 56.41Z" fill="#77736b"/><path d="M0.00 26.19 L12.00 28.21 L16.00 34.25 L16.00 58.43 L0.00 58.43Z" fill="#b9ae9c"/><path d="M94.70 44.32 L105.50 40.29 L105.50 58.43 L94.70 58.43Z" fill="#b9b5aa"/><path d="M101.00 37.27 L104.00 37.27 L104.00 44.32 L101.00 44.32Z" fill="#e0dccf"/><path d="M101.50 33.24 L103.50 33.24 L104.00 36.77 L101.00 36.77Z" fill="#d9b04a"/><path d="M0.00 55.41 L105.50 54.40 L105.50 68.30 L0.00 68.30Z" fill="#c4c0b9"/><path d="M0.00 62.46 L105.50 60.44 L105.50 68.30 L0.00 68.30Z" fill="#b9b5af"/><path d="M8.60 28.21 L10.60 28.21 L11.00 68.30 L8.20 68.30Z" fill="#4d4d4d"/><path d="M5.00 17.13 L8.00 15.11 L9.00 25.18 L6.00 26.19Z" fill="#555"/><path d="M12.00 21.15 L15.00 19.14 L15.50 29.21 L12.50 30.22Z" fill="#555"/><rect width="105.5" height="68.3" fill="url(#shA)"/></svg>
<svg class="r" style="left:167.20px;top:265.60px;border-radius:1px" width="44.80" height="30.20" viewBox="0 0 44.8 30.2" preserveAspectRatio="none"><rect width="44.8" height="30.2" fill="#4a8ee0"/><path d="M0.00 0.00 L44.80 0.00 L44.80 14.09 L0.00 14.09Z" fill="#3d82d6"/><path d="M3.98 17.11 L13.44 16.11 L13.44 25.17 L3.98 25.17Z" fill="#c8c0ae"/><path d="M13.44 4.03 L30.26 4.03 L40.52 18.72 L40.52 25.17 L13.44 25.17Z" fill="#ddd7ca"/><path d="M13.44 4.03 L16.92 4.03 L16.92 25.17 L13.44 25.17Z" fill="#c9c2b2"/><path d="M19.91 14.09 L39.82 20.13 L39.82 21.14 L19.91 15.10Z" fill="#cfc8b8"/><path d="M40.52 18.62 L44.80 17.62 L44.80 25.17 L40.52 25.17Z" fill="#6a6a66"/><path d="M0.00 0.00 L4.08 0.00 L4.08 29.19 L0.00 29.19Z" fill="#4a4a42"/><path d="M1.99 0.00 L3.38 0.00 L3.58 30.20 L1.79 30.20Z" fill="#1e1e1e"/><path d="M23.40 4.03 L24.49 4.03 L24.49 25.17 L23.40 25.17Z" fill="#444"/><path d="M0.00 24.16 L44.80 24.16 L44.80 30.20 L0.00 30.20Z" fill="#918e89"/><path d="M0.00 27.68 L44.80 27.68 L44.80 30.20 L0.00 30.20Z" fill="#84817c"/></svg>
<svg class="r" style="left:167.10px;top:344.80px;" width="44.80" height="29.70" viewBox="0 0 44.8 29.7" preserveAspectRatio="none"><defs><clipPath id="c167344"><rect width="44.8" height="29.7" rx="1"/></clipPath></defs><g clip-path="url(#c167344)"><rect width="44.8" height="29.7" fill="#dfe6ee"/><path d="M0.00 0.00 L44.80 0.00 L44.80 11.88 L0.00 11.88Z" fill="#d3dce6"/><path d="M0.00 16.83 L22.40 0.79 L22.90 26.73 L0.00 28.21Z" fill="#7a7473"/><path d="M22.40 0.79 L28.87 4.46 L44.80 17.82 L44.80 28.21 L22.90 26.73Z" fill="#8c8684"/><path d="M0.50 18.20 L22.40 3.90 L22.40 6.08 L0.50 19.78Z" fill="#d6d3d0"/><path d="M0.50 19.68 L22.40 7.28 L22.40 9.45 L0.50 21.26Z" fill="#d6d3d0"/><path d="M0.50 21.16 L22.40 10.65 L22.40 12.83 L0.50 22.74Z" fill="#d6d3d0"/><path d="M0.50 22.64 L22.40 14.02 L22.40 16.20 L0.50 24.22Z" fill="#d6d3d0"/><path d="M0.50 24.12 L22.40 17.39 L22.40 19.57 L0.50 25.70Z" fill="#d6d3d0"/><path d="M0.50 25.60 L22.40 20.76 L22.40 22.94 L0.50 27.18Z" fill="#d6d3d0"/><path d="M28.87 8.46 L44.80 19.69 L44.80 21.18 L28.87 10.44Z" fill="#d4d1cd"/><path d="M28.87 11.81 L44.80 21.25 L44.80 22.74 L28.87 13.79Z" fill="#d4d1cd"/><path d="M28.87 15.15 L44.80 22.81 L44.80 24.29 L28.87 17.13Z" fill="#d4d1cd"/><path d="M28.87 18.49 L44.80 24.37 L44.80 25.85 L28.87 20.47Z" fill="#d4d1cd"/><path d="M28.87 21.83 L44.80 25.93 L44.80 27.41 L28.87 23.81Z" fill="#d4d1cd"/><path d="M21.40 1.48 L26.38 2.97 L26.38 27.72 L21.40 27.72Z" fill="#7c5e55"/><path d="M29.87 4.95 L34.35 7.42 L34.35 27.72 L29.87 27.72Z" fill="#83665d"/><path d="M18.92 0.79 L22.40 0.00 L28.87 3.76 L28.87 4.95 L22.40 1.58 L18.92 1.98Z" fill="#6a5a55"/><path d="M0.00 26.23 L44.80 26.73 L44.80 29.70 L0.00 29.70Z" fill="#55585e"/><path d="M15.93 23.76 L21.90 23.76 L21.90 27.72 L15.93 27.72Z" fill="#c98a4a"/><path d="M2.99 26.73 L12.94 26.73 L12.94 28.21 L2.99 28.21Z" fill="#2f5f8f"/></g></svg>
<svg class="r" style="left:735.20px;top:163.00px;" width="65.60" height="43.25" viewBox="0 0 65.6 43.25" preserveAspectRatio="none"><defs><clipPath id="c735163"><rect width="65.6" height="43.25" rx="1.5"/></clipPath></defs><g clip-path="url(#c735163)"><rect width="65.6" height="43.25" fill="#dfe6ee"/><path d="M0.00 0.00 L65.60 0.00 L65.60 17.30 L0.00 17.30Z" fill="#d3dce6"/><path d="M0.00 24.51 L32.80 1.15 L33.53 38.92 L0.00 41.09Z" fill="#7a7473"/><path d="M32.80 1.15 L42.28 6.49 L65.60 25.95 L65.60 41.09 L33.53 38.92Z" fill="#8c8684"/><path d="M0.73 26.50 L32.80 5.69 L32.80 8.86 L0.73 28.80Z" fill="#d6d3d0"/><path d="M0.73 28.65 L32.80 10.60 L32.80 13.77 L0.73 30.96Z" fill="#d6d3d0"/><path d="M0.73 30.81 L32.80 15.51 L32.80 18.68 L0.73 33.12Z" fill="#d6d3d0"/><path d="M0.73 32.96 L32.80 20.42 L32.80 23.59 L0.73 35.27Z" fill="#d6d3d0"/><path d="M0.73 35.12 L32.80 25.33 L32.80 28.50 L0.73 37.43Z" fill="#d6d3d0"/><path d="M0.73 37.27 L32.80 30.24 L32.80 33.41 L0.73 39.58Z" fill="#d6d3d0"/><path d="M42.28 12.33 L65.60 28.67 L65.60 30.84 L42.28 15.21Z" fill="#d4d1cd"/><path d="M42.28 17.19 L65.60 30.95 L65.60 33.11 L42.28 20.08Z" fill="#d4d1cd"/><path d="M42.28 22.06 L65.60 33.22 L65.60 35.38 L42.28 24.94Z" fill="#d4d1cd"/><path d="M42.28 26.92 L65.60 35.49 L65.60 37.65 L42.28 29.81Z" fill="#d4d1cd"/><path d="M42.28 31.79 L65.60 37.76 L65.60 39.92 L42.28 34.67Z" fill="#d4d1cd"/><path d="M31.34 2.16 L38.63 4.33 L38.63 40.37 L31.34 40.37Z" fill="#7c5e55"/><path d="M43.73 7.21 L50.29 10.81 L50.29 40.37 L43.73 40.37Z" fill="#83665d"/><path d="M27.70 1.15 L32.80 0.00 L42.28 5.48 L42.28 7.21 L32.80 2.31 L27.70 2.88Z" fill="#6a5a55"/><path d="M0.00 38.20 L65.60 38.92 L65.60 43.25 L0.00 43.25Z" fill="#55585e"/><path d="M23.32 34.60 L32.07 34.60 L32.07 40.37 L23.32 40.37Z" fill="#c98a4a"/><path d="M4.37 38.92 L18.95 38.92 L18.95 41.09 L4.37 41.09Z" fill="#2f5f8f"/></g></svg>
<div class="t" style="left:467.00px;top:42px;font-size:4.20px;color:rgba(255,255,255,.75);">Центральный офис</div>
<div class="t" style="left:467.00px;top:49px;font-size:6.00px;color:#fff;">г. Москва, Ильинка д.5/2, оф.</div>
<div class="t" style="left:467.00px;top:57px;font-size:6.00px;color:#fff;">518</div>
<div class="t" style="left:467.00px;top:81px;font-size:4.37px;color:#9a9a9a;">Режим работы</div>
<div class="t" style="left:467.00px;top:88px;font-size:4.84px;color:#707070;">Пн. – Пт.: с 9:00 до 18:00</div>
<div class="t" style="left:467.00px;top:98px;font-size:4.37px;color:#9a9a9a;">Телефон</div>
<div class="t" style="left:467.00px;top:106px;font-size:4.80px;color:#707070;">+7 (916) 441 17 29</div>
<div class="t" style="left:467.00px;top:114px;font-size:4.80px;color:#707070;">+7 (495) 161 15 55</div>
<div class="t" style="left:467.00px;top:122px;font-size:4.80px;color:#707070;">+7 (495) 220 04 76</div>
<div class="t" style="left:467.00px;top:132px;font-size:4.37px;color:#9a9a9a;">E-mail</div>
<div class="t" style="left:467.00px;top:139px;font-size:5.00px;color:#707070;">info@fondsrd.ru</div>
<div class="r" style="left:466.30px;top:152.20px;width:87.30px;height:12.60px;border:0.6px solid #d3e0ee;border-radius:7px"></div>
<div class="t" style="left:493.00px;top:157px;font-size:4.70px;color:#3d74b4;font-weight:700;">Подать заявку</div>
<div class="t" style="left:157.00px;top:170px;font-size:7.41px;color:#707070;">Юридический адрес Фонда</div>
<div class="r" style="left:157.30px;top:184.40px;width:284.70px;height:42.00px;border:0.6px solid #f0f0f0"></div>
<div class="t" style="left:166.80px;top:194px;font-size:5.65px;color:#707070;">г. Москва, вн.тер.г. муниципальный округ</div>
<div class="t" style="left:166.80px;top:201px;font-size:5.35px;color:#707070;">Басманный, б-р Чистопрудный, д. 5, ком. 22</div>
<svg class="r" style="left:166.70px;top:210.40px;" width="4.00" height="4.00" viewBox="0 0 4.0 4.0" preserveAspectRatio="none"><circle cx="2.0" cy="2.0" r="1.75" fill="none" stroke="#b5b5b5" stroke-width="0.5"/><path d="M2.0 0.9V2.0L2.7 2.5" fill="none" stroke="#b5b5b5" stroke-width="0.5"/></svg>
<div class="t" style="left:173.80px;top:211px;font-size:4.50px;color:#707070;">Пн - Пт: 09:00 - 18:00</div>
<div class="t" style="left:286.20px;top:195px;font-size:4.80px;color:#707070;">+ 7 (495) 220 04 76</div>
<div class="t" style="left:286.20px;top:203px;font-size:5.10px;color:#707070;">info@fondsrd.ru</div>
<svg class="r" style="left:374.40px;top:194.60px;" width="3.00" height="3.90" viewBox="0 0 3.0 3.9" preserveAspectRatio="none"><path d="M1.5 3.9 C1.0499999999999998 2.925 0 2.25 0 1.5 A1.5 1.5 0 1 1 3.0 1.5 C3.0 2.25 1.9500000000000002 2.925 1.5 3.9Z" fill="#3a7bc2"/><circle cx="1.5" cy="1.5" r="0.675" fill="#fff"/></svg>
<div class="t" style="left:381.80px;top:196px;font-size:4.67px;color:#3a7bc2;border-bottom:0.5px dotted #9bbde0;padding-bottom:0.4px">На карте</div>
<svg class="r" style="left:425.20px;top:195.00px;" width="7.80" height="3.60" viewBox="0 0 7.8 3.6" preserveAspectRatio="none"><path d="M0 1.8H7.6M6.0 0.1L7.6 1.8L6.0 3.5" fill="none" stroke="#c2c2c2" stroke-width="0.6"/></svg>
<div class="t" style="left:157.50px;top:240px;font-size:7.30px;color:#707070;">Приёмная Фонда</div>
<div class="r" style="left:157.30px;top:256.60px;width:284.70px;height:49.00px;border:0.6px solid #f0f0f0"></div>
<div class="t" style="left:222.00px;top:267px;font-size:5.30px;color:#707070;">г. Москва, Ильинка д.5/2, оф. 518</div>
<div class="t" style="left:312.20px;top:268px;font-size:4.90px;color:#707070;">+7 (916) 441-17-29</div>
<svg class="r" style="left:388.30px;top:267.40px;" width="3.00" height="3.90" viewBox="0 0 3.0 3.9" preserveAspectRatio="none"><path d="M1.5 3.9 C1.0499999999999998 2.925 0 2.25 0 1.5 A1.5 1.5 0 1 1 3.0 1.5 C3.0 2.25 1.9500000000000002 2.925 1.5 3.9Z" fill="#3a7bc2"/><circle cx="1.5" cy="1.5" r="0.675" fill="#fff"/></svg>
<div class="t" style="left:395.60px;top:268px;font-size:4.67px;color:#3a7bc2;">На карте</div>
<svg class="r" style="left:425.80px;top:266.60px;" width="7.20" height="3.60" viewBox="0 0 7.2 3.6" preserveAspectRatio="none"><path d="M0 1.8H7.0M5.4 0.1L7.0 1.8L5.4 3.5" fill="none" stroke="#c2c2c2" stroke-width="0.6"/></svg>
<svg class="r" style="left:222.00px;top:276.00px;" width="4.00" height="4.00" viewBox="0 0 4.0 4.0" preserveAspectRatio="none"><circle cx="2.0" cy="2.0" r="1.75" fill="none" stroke="#b5b5b5" stroke-width="0.5"/><path d="M2.0 0.9V2.0L2.7 2.5" fill="none" stroke="#b5b5b5" stroke-width="0.5"/></svg>
<div class="t" style="left:228.75px;top:277px;font-size:4.55px;color:#707070;">Пн - Пт: 9.00 - 18.00</div>
<div class="t" style="left:313.50px;top:277px;font-size:4.90px;color:#707070;">help@fondsrd.ru</div>
<div class="t" style="left:157.50px;top:320px;font-size:7.47px;color:#3a3a3a;">Партнёр Фонда Межрегиональная инспекция ФНС по управлению долгом</div>
<div class="r" style="left:157.30px;top:335.40px;width:285.00px;height:49.20px;border:0.6px solid #f0f0f0"></div>
<div class="t" style="left:222.00px;top:344px;font-size:5.34px;color:#707070;">г. Москва, Орликов пер., д. 3, стр.</div>
<div class="t" style="left:222.00px;top:352px;font-size:5.34px;color:#707070;">1</div>
<svg class="r" style="left:222.00px;top:361.30px;" width="4.00" height="4.00" viewBox="0 0 4.0 4.0" preserveAspectRatio="none"><circle cx="2.0" cy="2.0" r="1.75" fill="none" stroke="#b5b5b5" stroke-width="0.5"/><path d="M2.0 0.9V2.0L2.7 2.5" fill="none" stroke="#b5b5b5" stroke-width="0.5"/></svg>
<div class="t" style="left:228.80px;top:362px;font-size:4.55px;color:#707070;">Пн - Пт: 9.00 - 18.00</div>
<div class="t" style="left:312.20px;top:345px;font-size:4.75px;color:#707070;">+7 (499) 673-90-04</div>
<div class="t" style="left:312.20px;top:354px;font-size:5.00px;color:#707070;">call -</div>
<div class="t" style="left:312.20px;top:360px;font-size:5.05px;color:#707070;">center.miudol.r9967@tax.gov.ru</div>
<svg class="r" style="left:388.30px;top:344.90px;" width="3.00" height="3.90" viewBox="0 0 3.0 3.9" preserveAspectRatio="none"><path d="M1.5 3.9 C1.0499999999999998 2.925 0 2.25 0 1.5 A1.5 1.5 0 1 1 3.0 1.5 C3.0 2.25 1.9500000000000002 2.925 1.5 3.9Z" fill="#3a7bc2"/><circle cx="1.5" cy="1.5" r="0.675" fill="#fff"/></svg>
<div class="t" style="left:395.60px;top:345px;font-size:4.67px;color:#3a7bc2;border-bottom:0.5px dotted #9bbde0;padding-bottom:0.4px">На карте</div>
<svg class="r" style="left:425.80px;top:345.40px;" width="7.20" height="3.60" viewBox="0 0 7.2 3.6" preserveAspectRatio="none"><path d="M0 1.8H7.0M5.4 0.1L7.0 1.8L5.4 3.5" fill="none" stroke="#c2c2c2" stroke-width="0.6"/></svg>
<svg class="r" style="left:614.00px;top:388.50px;" width="13.00" height="13.00" viewBox="0 0 13 13" preserveAspectRatio="none"><circle cx="6.5" cy="6.5" r="6.5" fill="#1866b6"/><path d="M6.5 9.3V4M4.8 5.7L6.5 4L8.2 5.7" fill="none" stroke="#fff" stroke-width="0.9"/></svg>
<div class="r" style="left:74.00px;top:408.30px;width:574.00px;height:43.70px;background:#2c2c2c"></div>
<svg class="r" style="left:225.40px;top:425.60px;" width="12.70" height="10.40" viewBox="0 0 12.7 10.4" preserveAspectRatio="none"><path d="M0.4 5.2L12.3 0.4L11.3 10L5 7.6Z M5 7.6L12.3 0.4 M5 7.6L4.3 10L6.8 8.3" fill="none" stroke="#bbb" stroke-width="0.55" stroke-linejoin="round"/></svg>
<div class="t" style="left:245.00px;top:426px;font-size:5.24px;color:#fff;font-weight:700;">Подписывайтесь</div>
<div class="t" style="left:245.00px;top:433px;font-size:5.24px;color:#fff;font-weight:700;">на новости и акции</div>
<div class="r" style="left:331.25px;top:423.10px;width:163.20px;height:14.70px;background:#303030;border:0.6px solid #3b3b3b;border-radius:1.5px"></div>
<div class="t" style="left:335.60px;top:429px;font-size:4.30px;color:#8a8a8a;">E-mail</div>
<svg class="r" style="left:481.90px;top:429.70px;" width="6.40" height="1.80" viewBox="0 0 6.4 1.8" preserveAspectRatio="none"><path d="M0 0.9H6.2M5.5 0.1L6.2 0.9L5.5 1.7" fill="none" stroke="#999" stroke-width="0.7"/></svg>
<div class="r" style="left:74.00px;top:452.00px;width:574.00px;height:133.00px;background:#343434"></div>
<div class="t" style="left:157.10px;top:471px;font-size:5.13px;color:#fff;font-weight:700;">Фонд</div>
<div class="t" style="left:238.10px;top:471px;font-size:5.13px;color:#fff;font-weight:700;">Помощь</div>
<div class="t" style="left:319.80px;top:471px;font-size:5.13px;color:#fff;font-weight:700;">Информация</div>
<div class="t" style="left:157.10px;top:485px;font-size:4.42px;color:#8f8f8f;">О фонде</div>
<div class="t" style="left:157.10px;top:494px;font-size:4.42px;color:#8f8f8f;">Партнеры</div>
<div class="t" style="left:157.10px;top:503px;font-size:4.42px;color:#8f8f8f;">Руководство</div>
<div class="t" style="left:157.10px;top:513px;font-size:4.42px;color:#8f8f8f;">Реквизиты</div>
<div class="t" style="left:157.10px;top:522px;font-size:4.42px;color:#8f8f8f;">Документы</div>
<div class="t" style="left:157.10px;top:531px;font-size:4.42px;color:#8f8f8f;">Отзывы</div>
<div class="t" style="left:238.10px;top:485px;font-size:4.42px;color:#8f8f8f;">Как получить помощь</div>
<div class="t" style="left:238.10px;top:494px;font-size:4.42px;color:#8f8f8f;">Правила работы Фонда</div>
<div class="t" style="left:238.10px;top:503px;font-size:4.42px;color:#8f8f8f;">Анкета для получения услуг</div>
<div class="t" style="left:319.80px;top:485px;font-size:4.42px;color:#8f8f8f;">Вопросы и ответы</div>
<div class="t" style="left:319.80px;top:494px;font-size:4.42px;color:#8f8f8f;">Новости</div>
<div class="t" style="left:319.80px;top:503px;font-size:4.42px;color:#fff;font-weight:700;">Контакты</div>
<svg class="r" style="left:481.60px;top:471.60px;" width="3.20" height="4.40" viewBox="0 0 3.2 4.4" preserveAspectRatio="none"><path d="M1.3 0.4L0.7 0.6C0.3 1.6 0.3 2.8 0.7 3.8L1.3 4L1.9 3.1L1.5 2.7C1.4 2.4 1.4 2 1.5 1.7L1.9 1.3Z" fill="none" stroke="#888" stroke-width="0.45" stroke-linejoin="round"/></svg>
<div class="t" style="left:490.60px;top:473px;font-size:4.82px;color:#fff;font-weight:700;">+7 (916) 441 17 29</div>
<svg class="r" style="left:534.40px;top:473.00px;" width="2.20" height="1.40" viewBox="0 0 2.2 1.4" preserveAspectRatio="none"><path d="M0 0H2.2L1.1 1.4Z" fill="#aaa"/></svg>
<div class="t" style="left:490.60px;top:480px;font-size:4.46px;color:#8a8a8a;">Заказать звонок</div>
<svg class="r" style="left:481.50px;top:490.20px;" width="4.00" height="3.20" viewBox="0 0 4 3.2" preserveAspectRatio="none"><rect x="0.25" y="0.25" width="3.5" height="2.7" rx="0.8" fill="none" stroke="#888" stroke-width="0.45"/><path d="M0.5 1.6H3.5" stroke="#888" stroke-width="0.4"/></svg>
<div class="t" style="left:490.60px;top:491px;font-size:4.81px;color:#fff;">info@fondsrd.ru</div>
<svg class="r" style="left:482.20px;top:501.60px;" width="3.00" height="4.00" viewBox="0 0 3 4" preserveAspectRatio="none"><path d="M1.5 3.8C0.6 2.8 0.3 2.1 0.3 1.5A1.2 1.2 0 1 1 2.7 1.5C2.7 2.1 2.4 2.8 1.5 3.8Z" fill="none" stroke="#888" stroke-width="0.45"/></svg>
<div class="t" style="left:490.60px;top:502px;font-size:4.19px;color:#fff;font-weight:700;">г. Москва, Ильинка д.5/2, оф. 518</div>
<div class="r" style="left:157.00px;top:553.20px;width:406.00px;height:0.60px;background:#3f3f3f"></div>
<div class="t" style="left:157.00px;top:569px;font-size:4.38px;color:#8a8a8a;">© 2024 Фонд содействия реструктуризации долга</div>
<div class="t" style="left:311.50px;top:569px;font-size:4.44px;color:#8a8a8a;">Политика конфиденциальности</div>
<div class="t" style="left:430.80px;top:569px;font-size:4.33px;color:#8a8a8a;">Версия для слабовидящих</div>
<div class="t" style="left:538.80px;top:569px;font-size:4.34px;color:#8a8a8a;">Карта сайта</div>
<div class="r" style="left:720.60px;top:-10.00px;width:160.60px;height:88.30px;border:0.5px solid #f1f1f1"></div>
<div class="t" style="left:734.75px;top:4px;font-size:7.80px;color:#707070;">г. Москва, Ильинка д.5/2, оф. 518</div>
<svg class="r" style="left:735.20px;top:17.60px;" width="4.20" height="5.60" viewBox="0 0 4.2 5.6" preserveAspectRatio="none"><path d="M2.1 5.6 C1.47 4.199999999999999 0 3.1500000000000004 0 2.1 A2.1 2.1 0 1 1 4.2 2.1 C4.2 3.1500000000000004 2.7300000000000004 4.199999999999999 2.1 5.6Z" fill="#3a7bc2"/><circle cx="2.1" cy="2.1" r="0.9450000000000001" fill="#fff"/></svg>
<div class="t" style="left:745.00px;top:18px;font-size:6.77px;color:#3a7bc2;border-bottom:0.6px dotted #9bbde0;padding-bottom:0.6px">На карте</div>
<svg class="r" style="left:735.20px;top:30.00px;" width="5.60" height="5.60" viewBox="0 0 5.6 5.6" preserveAspectRatio="none"><circle cx="2.8" cy="2.8" r="2.525" fill="none" stroke="#aaa" stroke-width="0.55"/><path d="M2.8 1.26V2.8L3.78 3.5" fill="none" stroke="#aaa" stroke-width="0.55"/></svg>
<div class="t" style="left:745.60px;top:30px;font-size:6.61px;color:#707070;">Пн - Пт: 9.00 - 18.00</div>
<div class="t" style="left:734.75px;top:42px;font-size:7.04px;color:#707070;">+7 (916) 441-17-29</div>
<div class="t" style="left:734.75px;top:56px;font-size:7.20px;color:#707070;">help@fondsrd.ru</div>
<div class="t" style="left:720.50px;top:99px;font-size:11.00px;color:#707070;">Партнёр Фонда</div>
<div class="t" style="left:720.50px;top:112px;font-size:11.00px;color:#707070;">Межрегиональная инспекция</div>
<div class="t" style="left:720.50px;top:126px;font-size:11.00px;color:#707070;">ФНС по управлению долгом</div>
<div class="r" style="left:720.50px;top:148.40px;width:160.50px;height:149.70px;border:0.5px solid #f1f1f1"></div>
<svg class="r" style="left:856.20px;top:164.00px;" width="11.10" height="4.80" viewBox="0 0 11.1 4.8" preserveAspectRatio="none"><path d="M0 2.4H10.9M8.7 0.1L10.9 2.4L8.7 4.7" fill="none" stroke="#c4c4c4" stroke-width="0.7"/></svg>
<div class="t" style="left:735.00px;top:224px;font-size:7.74px;color:#3a3a3a;">г. Москва, Орликов пер., д. 3, стр. 1</div>
<svg class="r" style="left:735.20px;top:237.50px;" width="4.20" height="5.60" viewBox="0 0 4.2 5.6" preserveAspectRatio="none"><path d="M2.1 5.6 C1.47 4.199999999999999 0 3.1500000000000004 0 2.1 A2.1 2.1 0 1 1 4.2 2.1 C4.2 3.1500000000000004 2.7300000000000004 4.199999999999999 2.1 5.6Z" fill="#3a7bc2"/><circle cx="2.1" cy="2.1" r="0.9450000000000001" fill="#fff"/></svg>
<div class="t" style="left:744.80px;top:238px;font-size:6.77px;color:#3a7bc2;border-bottom:0.6px dotted #9bbde0;padding-bottom:0.6px">На карте</div>
<svg class="r" style="left:735.20px;top:250.20px;" width="5.60" height="5.60" viewBox="0 0 5.6 5.6" preserveAspectRatio="none"><circle cx="2.8" cy="2.8" r="2.525" fill="none" stroke="#aaa" stroke-width="0.55"/><path d="M2.8 1.26V2.8L3.78 3.5" fill="none" stroke="#aaa" stroke-width="0.55"/></svg>
<div class="t" style="left:745.50px;top:250px;font-size:6.61px;color:#3a3a3a;">Пн - Пт: 9.00 - 18.00</div>
<div class="t" style="left:735.00px;top:263px;font-size:7.04px;color:#3a3a3a;">+7 (499) 673-90-04</div>
<div class="t" style="left:735.00px;top:276px;font-size:7.42px;color:#3a3a3a;">call-center.miudol.r9967@tax.gov.ru</div>
<div class="r" style="left:709.50px;top:333.60px;width:182.00px;height:70.30px;background:#2c2c2c"></div>
<svg class="r" style="left:720.80px;top:348.20px;" width="17.40" height="14.50" viewBox="0 0 17.4 14.5" preserveAspectRatio="none"><path d="M0.5 7.2L16.9 0.5L15.6 14L7 10.6Z M7 10.6L16.9 0.5 M7 10.6L6 14L9.4 11.6" fill="none" stroke="#bbb" stroke-width="0.7" stroke-linejoin="round"/></svg>
<div class="t" style="left:748.50px;top:347px;font-size:7.40px;color:#fff;font-weight:700;">Подписывайтесь</div>
<div class="t" style="left:748.50px;top:357px;font-size:7.50px;color:#fff;font-weight:700;">на новости и акции</div>
<div class="r" style="left:720.20px;top:372.20px;width:160.50px;height:21.50px;background:#303030;border:0.6px solid #3b3b3b;border-radius:2px"></div>
<div class="t" style="left:726.20px;top:380px;font-size:6.30px;color:#888;">E-mail</div>
<svg class="r" style="left:862.30px;top:381.40px;" width="9.90" height="3.20" viewBox="0 0 9.9 3.2" preserveAspectRatio="none"><path d="M0 1.6H9.700000000000001M8.3 0.1L9.700000000000001 1.6L8.3 3.1" fill="none" stroke="#aaa" stroke-width="0.7"/></svg>
<div class="r" style="left:709.50px;top:403.90px;width:182.00px;height:186.00px;background:#343434"></div>
<div class="t" style="left:720.70px;top:420px;font-size:7.50px;color:#fff;font-weight:700;">Фонд</div>
<div class="t" style="left:720.70px;top:437px;font-size:7.50px;color:#fff;font-weight:700;">Помощь</div>
<div class="t" style="left:720.70px;top:454px;font-size:7.50px;color:#fff;font-weight:700;">Информация</div>
<svg class="r" style="left:877.40px;top:423.60px;" width="3.00" height="2.00" viewBox="0 0 3.0 2.0" preserveAspectRatio="none"><path d="M0 0H3L1.5 2Z" fill="#f2f2f2"/></svg>
<svg class="r" style="left:877.40px;top:440.30px;" width="3.00" height="2.00" viewBox="0 0 3.0 2.0" preserveAspectRatio="none"><path d="M0 0H3L1.5 2Z" fill="#f2f2f2"/></svg>
<svg class="r" style="left:877.40px;top:456.90px;" width="3.00" height="2.00" viewBox="0 0 3.0 2.0" preserveAspectRatio="none"><path d="M0 0H3L1.5 2Z" fill="#f2f2f2"/></svg>
<svg class="r" style="left:721.20px;top:472.20px;" width="4.40" height="5.80" viewBox="0 0 4.4 5.8" preserveAspectRatio="none"><path d="M1.8 0.5L0.9 0.8C0.4 2.2 0.4 3.6 0.9 5L1.8 5.3L2.6 4.1L2.1 3.5C1.9 3.1 1.9 2.6 2.1 2.2L2.6 1.7Z" fill="none" stroke="#9a9a9a" stroke-width="0.7" stroke-linejoin="round"/></svg>
<div class="t" style="left:733.20px;top:471px;font-size:7.06px;color:#fff;font-weight:700;">+7 (916) 441 17 29</div>
<svg class="r" style="left:796.80px;top:474.10px;" width="3.00" height="2.00" viewBox="0 0 3.0 2.0" preserveAspectRatio="none"><path d="M0 0H3L1.5 2Z" fill="#ddd"/></svg>
<div class="t" style="left:733.20px;top:483px;font-size:6.46px;color:#8c8c8c;">Заказать звонок</div>
<svg class="r" style="left:721.00px;top:498.60px;" width="4.80" height="4.20" viewBox="0 0 4.8 4.2" preserveAspectRatio="none"><rect x="0.35" y="0.35" width="4.1" height="3.5" rx="1" fill="none" stroke="#9a9a9a" stroke-width="0.7"/><path d="M0.7 2.1H4.1" stroke="#9a9a9a" stroke-width="0.6"/></svg>
<div class="t" style="left:733.20px;top:498px;font-size:7.03px;color:#fff;">info@fondsrd.ru</div>
<svg class="r" style="left:721.60px;top:514.60px;" width="4.00" height="5.20" viewBox="0 0 4 5.2" preserveAspectRatio="none"><path d="M2 5C0.9 3.8 0.4 2.9 0.4 2A1.6 1.6 0 1 1 3.6 2C3.6 2.9 3.1 3.8 2 5Z" fill="none" stroke="#9a9a9a" stroke-width="0.7"/></svg>
<div class="t" style="left:733.20px;top:515px;font-size:6.12px;color:#fff;font-weight:700;">г. Москва, Ильинка д.5/2, оф. 518</div>
<div class="r" style="left:720.50px;top:533.20px;width:160.50px;height:0.60px;background:#454545"></div>
<div class="t" style="left:720.40px;top:543px;font-size:6.41px;color:#9a9a9a;">© 2024 Фонд содействия реструктуризации долга</div>
<div class="t" style="left:720.40px;top:559px;font-size:6.47px;color:#9a9a9a;">Политика конфиденциальности</div>
<div class="t" style="left:720.40px;top:575px;font-size:6.28px;color:#9a9a9a;">Версия для слабовидящих</div>
<div class="t" style="left:845.90px;top:575px;font-size:6.30px;color:#9a9a9a;">Карта сайта</div>
<svg class="r" style="left:0.00px;top:0.00px;" width="960.00" height="620.00" viewBox="0 0 960 620" preserveAspectRatio="none"><path fill-rule="evenodd" fill="rgba(0,0,0,0.14)" d="M0 0H960V620H0Z M72 265H650A10 10 0 0 1 660 275V585A10 10 0 0 1 650 595H72A10 10 0 0 1 62 585V275A10 10 0 0 1 72 265Z M711 208H889A8 8 0 0 1 897 216V587A8 8 0 0 1 889 595H711A8 8 0 0 1 703 587V216A8 8 0 0 1 711 208Z"/></svg>
<div class="r" style="left:62.00px;top:265.00px;width:598.00px;height:330.00px;border-radius:10px;border:1px solid #1f6fc2;box-shadow:0 0 0 1px rgba(240,228,215,.35)"></div>
<div class="r" style="left:63.00px;top:266.00px;width:596.00px;height:328.00px;border-radius:9px;border-style:solid;border-color:#000;border-width:11px 11px 9px 11px"></div>
<div class="r" style="left:74.00px;top:277.00px;width:574.00px;height:308.00px;border-radius:0px;box-shadow:inset 0 0 0 0.8px rgba(255,255,255,.12)"></div>
<div class="r" style="left:703.00px;top:208.00px;width:194.00px;height:387.00px;border-radius:8px;border:1px solid #1f6fc2;box-shadow:0 0 0 1px rgba(240,228,215,.35)"></div>
<div class="r" style="left:704.00px;top:209.00px;width:192.00px;height:385.00px;border-radius:7px;border-style:solid;border-color:#000;border-width:6px 5px 4px 6px"></div>
<div class="r" style="left:710.00px;top:215.00px;width:181.00px;height:375.00px;border-radius:4px;box-shadow:inset 0 0 0 0.8px rgba(255,255,255,.12)"></div>
</body></html>
